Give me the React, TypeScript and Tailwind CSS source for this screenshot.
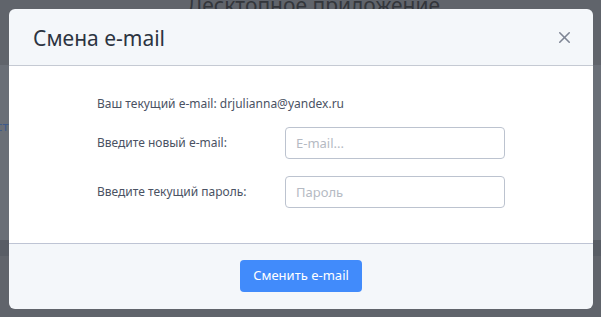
import { X } from "lucide-react";

const font = { fontFamily: '"Noto Sans", "Open Sans", sans-serif' };

function Field({ label, placeholder, type }: { label: string; placeholder: string; type: string }) {
  return (
    <div className="flex items-center h-8">
      <span className="w-[188px] text-[12px] text-[#4a5263]">{label}</span>
      <input
        type={type}
        placeholder={placeholder}
        className="w-[220px] h-8 rounded-[4px] border border-[#bcc3cf] bg-white px-[10px] text-[13px] text-[#333] placeholder:text-[#b5bac3] outline-none"
      />
    </div>
  );
}

export default function App() {
  return (
    <div className="relative w-[601px] h-[317px] overflow-hidden bg-[#60646b]" style={font}>
      {/* page behind the overlay */}
      <div className="absolute inset-0">
        <div className="-mt-[10px] text-center pl-[26px] text-[21px] text-[#33363b]">Десктопное приложение</div>
        <div className="mt-[43px] h-[175px] bg-[#6a6f77] pt-[52px] text-[13px] text-[#3e5a8c]">
          <span className="-ml-[4px]">ст</span>
        </div>
        <div className="h-[16px] bg-[#585d65]" />
      </div>

      <div className="absolute left-[9px] top-[9px] w-[584px] h-[300px] rounded-[6px] bg-[#f4f7fa] flex flex-col overflow-hidden">
        <div className="h-[57px] flex items-center justify-between pl-[24px] pr-[19px] border-b border-[#c5cad3]">
          <h2 className="text-[21px] text-[#2c3441] leading-none pt-[2px]">Смена e-mail</h2>
          <X size={19} strokeWidth={2} className="text-[#7e8594]" />
        </div>
        <div className="h-[178px] bg-white border-b border-[#bec4d4] pl-[88px] pt-[30px] flex flex-col">
          <p className="text-[12px] text-[#4a5263] leading-[16px]">Ваш текущий e-mail: drjulianna@yandex.ru</p>
          <div className="mt-[15px] flex flex-col gap-[17px]">
            <Field label="Введите новый e-mail:" placeholder="E-mail..." type="email" />
            <Field label="Введите текущий пароль:" placeholder="Пароль" type="password" />
          </div>
        </div>
        <div className="flex-1 flex items-start justify-center pt-[16px]">
          <button className="h-[32px] w-[122px] rounded-[4px] bg-[#418bfb] text-white text-[13px]">Сменить e-mail</button>
        </div>
      </div>
    </div>
  );
}
